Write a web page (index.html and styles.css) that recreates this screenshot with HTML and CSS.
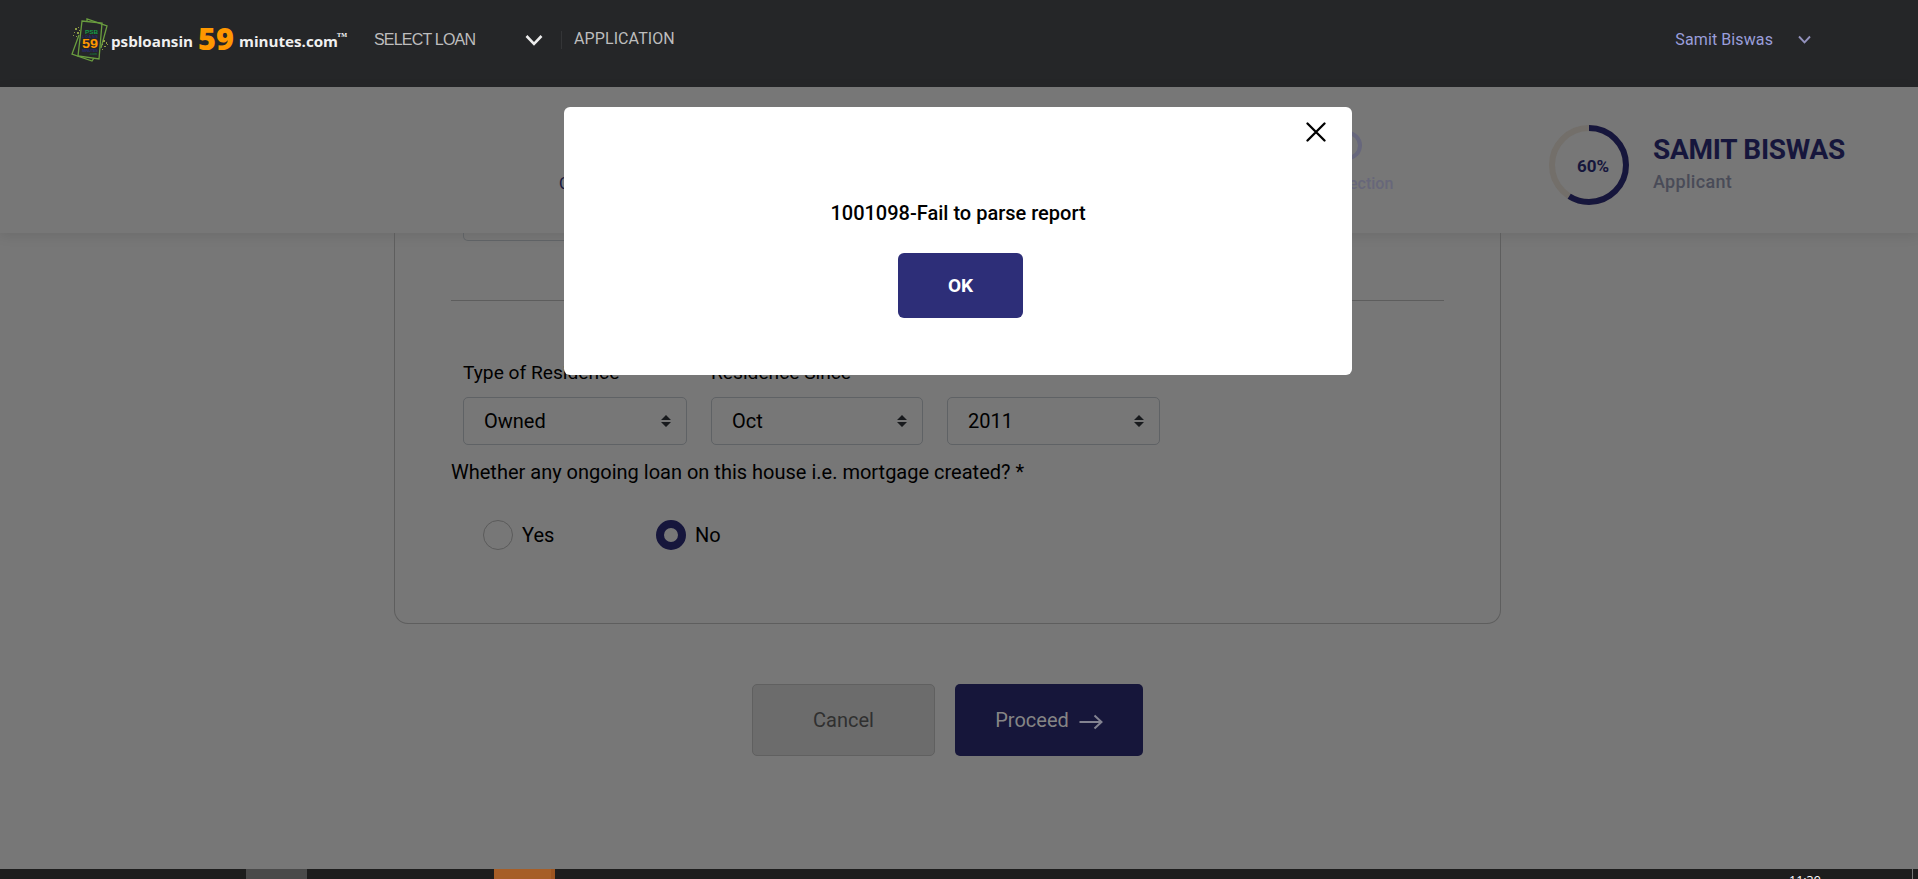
FILE: index.html
```html
<!DOCTYPE html>
<html lang="en">
<head>
<meta charset="utf-8">
<title>psbloansin59minutes.com</title>
<link rel="stylesheet" href="styles.css">
</head>
<body>
<header class="topbar">
  <svg class="logo" width="278" height="50" viewBox="0 0 278 50">
    <g fill="none" stroke="#6a9d3f" stroke-width="1.3">
      <path d="M12 7 32 9 29 45 8 42Z"/>
      <path d="M17 7V5L37 12 31 34M9 21 2 40 22 47 24 44"/>
    </g>
    <g fill="#8d9c45">
      <path d="M5 14h2v2h-2zM8 13h1v1h-1zM4 18h1v1h-1zM7 18h2v2h-2zM9 16h1v1h-1zM3 21h1v1h-1zM6 22h1v1h-1zM33 26h2v2h-2zM36 28h1v2h-1zM32 30h1v1h-1zM34 32h2v1h-2zM32 35h1v1h-1zM37 30h1v1h-1z"/>
    </g>
    <text class="logo-psb" x="15" y="19.500" textLength="13" lengthAdjust="spacingAndGlyphs">PSB</text>
    <text class="logo-loans" x="12" y="23.500" textLength="16">LOANS</text>
    <text class="logo-badge" x="12" y="34" textLength="16" lengthAdjust="spacingAndGlyphs">59</text>
    <text class="logo-loans" x="12" y="38" textLength="16">MINUTES</text>
    <text class="logo-dot" x="19" y="41" textLength="8">.com</text>
    <text class="logo-word" x="41" y="32.500" textLength="82" lengthAdjust="spacingAndGlyphs">psbloansin</text>
    <text class="logo-num" x="128" y="35.500" textLength="36" lengthAdjust="spacingAndGlyphs">59</text>
    <text class="logo-word" x="169" y="32.500" textLength="99" lengthAdjust="spacingAndGlyphs">minutes.com</text>
    <text class="logo-tm" x="267" y="22.500" textLength="10" lengthAdjust="spacingAndGlyphs">TM</text>
  </svg>
  <nav class="nav">
    <span class="nav-loan">SELECT LOAN</span>
    <svg class="nav-chevron" width="18" height="14" viewBox="0 0 18 14"><path d="M1.500 2 9 9.800 16.500 2" fill="none" stroke="#ededed" stroke-width="2.600"/></svg>
    <span class="nav-app">APPLICATION</span>
  </nav>
  <div class="account">
    <span class="account-name">Samit Biswas</span>
    <svg width="13" height="10" viewBox="0 0 13 10"><path d="M1 1.500 6.500 7.300 12 1.500" fill="none" stroke="#9392bd" stroke-width="1.900"/></svg>
  </div>
</header>

<section class="progressbar">
  <div class="step step-first">C</div>
  <div class="step step-last"><i class="step-ring"></i><span>ection</span></div>
  <div class="meter">
    <svg width="80" height="80" viewBox="0 0 80 80">
      <circle cx="40" cy="40" r="37" fill="none" stroke="#736f6a" stroke-width="6"/>
      <circle cx="40" cy="40" r="37" fill="none" stroke="#16163c" stroke-width="6" pathLength="100" stroke-dasharray="59 41" transform="rotate(-90 40 40)"/>
      <text class="meter-value" x="28" y="46.500">60%</text>
    </svg>
  </div>
  <div class="applicant">
    <h1>SAMIT BISWAS</h1>
    <p>Applicant</p>
  </div>
</section>

<main class="content">
  <form class="card">
    <div class="select select-cut"></div>
    <hr class="divider">
    <div class="fields">
      <div class="field field-type">
        <label>Type of Residence</label>
        <div class="select"><span>Owned</span><svg class="caret" width="10" height="12" viewBox="0 0 10 12"><path d="M0 5 5 0 10 5ZM0 7 5 12 10 7Z"/></svg></div>
      </div>
      <div class="field field-month">
        <label>Residence Since</label>
        <div class="select"><span>Oct</span><svg class="caret" width="10" height="12" viewBox="0 0 10 12"><path d="M0 5 5 0 10 5ZM0 7 5 12 10 7Z"/></svg></div>
      </div>
      <div class="field field-year">
        <div class="select"><span>2011</span><svg class="caret" width="10" height="12" viewBox="0 0 10 12"><path d="M0 5 5 0 10 5ZM0 7 5 12 10 7Z"/></svg></div>
      </div>
    </div>
    <p class="question">Whether any ongoing loan on this house i.e. mortgage created? *</p>
    <div class="radios">
      <div class="radio"><i class="dot"></i><span>Yes</span></div>
      <div class="radio"><i class="dot dot-on"></i><span>No</span></div>
    </div>
  </form>
  <div class="actions">
    <div class="btn btn-cancel">Cancel</div>
    <div class="btn btn-proceed"><span>Proceed</span><svg width="24" height="16" viewBox="0 0 24 16"><path d="M.500 8H22.500M15.500 1.500 22.500 8 15.500 14.500" fill="none" stroke="#838391" stroke-width="2"/></svg></div>
  </div>
</main>

<footer class="taskbar">
  <i class="task task-grey"></i>
  <i class="task task-orange"></i>
  <span class="clock">11:39</span>
  <i class="desktop-edge"></i>
</footer>

<div class="modal">
  <svg class="close" width="20" height="20" viewBox="0 0 20 20"><path d="M1.500 1.500 18.500 18.500M18.500 1.500 1.500 18.500" stroke="#000" stroke-width="2.300" stroke-linecap="round"/></svg>
  <p class="modal-text">1001098-Fail to parse report</p>
  <div class="btn-ok">OK</div>
</div>
</body>
</html>
```
FILE: styles.css
```css
* { box-sizing: border-box; }

body {
  margin: 0;
  width: 1918px;
  height: 879px;
  overflow: hidden;
  display: flex;
  flex-direction: column;
  background: #777;
  color: #000;
  font: 20px/24px Roboto, sans-serif;
}

h1, p { margin: 0; }
svg { display: block; flex: none; }

/* Top bar */
.topbar {
  height: 87px;
  flex: none;
  display: flex;
  align-items: flex-start;
  background: #252628;
  padding-left: 70px;
  padding-right: 107px;
}
.logo { margin-top: 14px; }
.logo text { font-family: "Open Sans", sans-serif; font-weight: 700; }
.logo .logo-word { font-size: 15px; font-weight: 700; fill: #f0f0f0; }
.logo .logo-num { font-size: 30px; font-weight: 800; fill: #ff9800; }
.logo .logo-tm { font: 700 6px "Liberation Serif", serif; fill: #fff; }
.logo .logo-psb { font: 700 6px "Liberation Sans", sans-serif; fill: #149c47; }
.logo .logo-loans { font: 700 4px "Liberation Sans", sans-serif; fill: #292a70; }
.logo .logo-badge { font: 700 13.5px "Liberation Sans", sans-serif; fill: #ff9800; }
.logo .logo-dot { font: 700 3px "Liberation Sans", sans-serif; fill: #15773b; }

.nav {
  display: flex;
  align-items: flex-start;
  margin-left: 26px;
  font-size: 16px;
  line-height: 20px;
  color: #bdbdbd;
}
.nav-loan {
  width: 151px;
  padding-top: 30px;
  font-family: "Liberation Sans", Arial, sans-serif;
  letter-spacing: -.8px;
}
.nav-chevron { margin-top: 34px; }
.nav-app {
  margin: 31px 0 0 18px;
  height: 18px;
  padding-left: 12px;
  line-height: 15px;
  letter-spacing: .1px;
  border-left: 1px solid #343537;
}
.account {
  margin-left: auto;
  padding-top: 29px;
  display: flex;
  align-items: center;
  gap: 25px;
  font-size: 16px;
  line-height: 21px;
  color: #9a9edb;
}
.account-name { letter-spacing: .1px; }

/* Applicant bar */
.progressbar {
  height: 146px;
  flex: none;
  display: flex;
  background: #777;
  box-shadow: 0 3px 12px rgba(0, 0, 0, .09);
}
.step { font-size: 16px; line-height: 20px; }
.step-first { margin-left: 559px; padding-top: 87px; width: 774px; color: #16163c; }
.step-last { width: 216px; padding-top: 44px; color: #67677a; font-weight: 500; }
.step-ring {
  display: block;
  width: 29px;
  height: 29px;
  border: 4px solid #67677c;
  border-radius: 50%;
}
.step-last span { display: block; margin: 14px 0 0 16px; }
.meter { padding-top: 38px; }
.meter-value { font: 700 17px Roboto, sans-serif; fill: #16163c; }
.applicant { margin-left: 24px; padding-top: 46px; }
.applicant h1 { font-size: 28px; line-height: 33px; font-weight: 700; letter-spacing: -.27px; color: #16163c; white-space: nowrap; }
.applicant p { font-size: 18px; font-weight: 500; line-height: 21px; letter-spacing: .3px; margin-top: 5px; color: #494b57; }

/* Form */
.content { flex: 1; min-height: 0; }
.card {
  width: 1107px;
  height: 391px;
  margin-left: 394px;
  padding: 0 56px;
  border: 1px solid #5e5e5e;
  border-top: 0;
  border-radius: 0 0 14px 14px;
}
.select {
  height: 48px;
  padding: 0 15px 0 20px;
  display: flex;
  align-items: center;
  justify-content: space-between;
  border: 1px solid #5f6265;
  border-radius: 5px;
}
.select-cut {
  width: 224px;
  height: 8px;
  margin-left: 12px;
  border-top: 0;
  border-radius: 0 0 5px 5px;
}
.caret { fill: #181a1d; }
.divider { margin: 59px 0 0; border: 0; border-top: 1px solid #5d5d5d; }
.fields { display: flex; align-items: flex-end; gap: 24px; margin: 60px 0 0 12px; }
.field-type { width: 224px; }
.field-month { width: 212px; }
.field-year { width: 213px; }
.field label { display: block; margin-bottom: 12px; font-size: 19.200px; }
.question { margin-top: 15px; }
.radios { display: flex; margin: 36px 0 0 32px; }
.radio { width: 173px; display: flex; align-items: center; gap: 9px; }
.dot { width: 30px; height: 30px; border: 1px solid #5b5b5b; border-radius: 50%; }
.dot-on { border: 8px solid #16163c; }

.actions { display: flex; gap: 20px; margin: 60px 0 0 752px; }
.btn {
  height: 72px;
  display: flex;
  align-items: center;
  justify-content: center;
  border-radius: 5px;
}
.btn-cancel { width: 183px; background: #6c6c6c; border: 1px solid #606060; color: #303030; }
.btn-proceed { width: 188px; gap: 10px; background: #16163a; color: #858585; }
.btn-proceed svg { margin-top: 3px; }

/* Taskbar */
.taskbar {
  height: 10px;
  flex: none;
  display: flex;
  overflow: hidden;
  background: #1d1d1d;
}
.task { width: 61px; }
.task-grey { margin-left: 246px; background: #4a4a4a; }
.task-orange { margin-left: 187px; background: #a65e27; border-right: 4px solid #9c5420; }
.clock {
  width: 123px;
  margin-left: 1234px;
  padding-top: 5px;
  font: 12.500px/14px "Open Sans", sans-serif;
  color: #fff;
}
.desktop-edge { width: 1px; background: #777; }

/* Message dialog */
.modal {
  position: absolute;
  left: 564px;
  top: 107px;
  width: 788px;
  height: 268px;
  display: flex;
  flex-direction: column;
  align-items: center;
  background: #fff;
  border-radius: 6px;
}
.close { align-self: flex-end; margin: 15px 26px 0 0; }
.modal-text { margin-top: 59px; font-weight: 500; }
.btn-ok {
  width: 125px;
  height: 65px;
  margin: 28px 0 0 5px;
  display: flex;
  align-items: center;
  justify-content: center;
  border-radius: 6px;
  background: #2d2e78;
  color: #fff;
  font-weight: 700;
  font-size: 19px;
}
```
